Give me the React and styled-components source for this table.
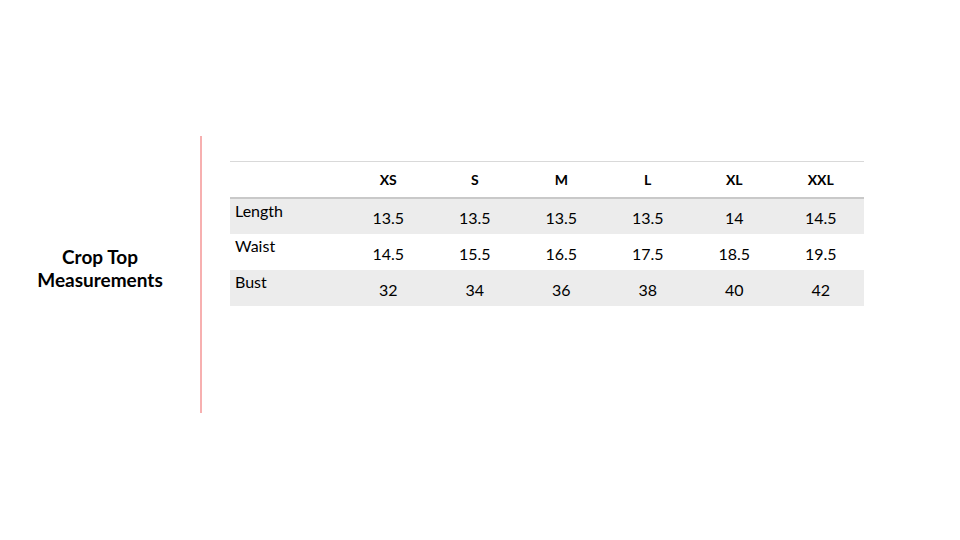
import React from "react";
import styled, { createGlobalStyle } from "styled-components";

const GlobalStyle = createGlobalStyle`
  html, body {
    margin: 0;
    padding: 0;
    background: #ffffff;
  }
  body {
    font-family: "Lato", "Open Sans", sans-serif;
    color: #000000;
  }
`;

const Page = styled.div`
  width: 960px;
  height: 540px;
  display: flex;
  align-items: flex-start;
  padding-top: 136px;
  box-sizing: border-box;
`;

const TitleColumn = styled.div`
  width: 202px;
  height: 277px;
  display: flex;
  align-items: center;
  justify-content: center;
  padding: 0 0 14px 0;
  box-sizing: border-box;
  border-right: 2px solid #f7b0b0;
`;

const Title = styled.h1`
  margin: 0;
  font-size: 19px;
  font-weight: 700;
  line-height: 23px;
  text-align: center;
`;

const Table = styled.table`
  margin-top: 25px;
  margin-left: 28px;
  width: 634px;
  border-collapse: collapse;
  table-layout: fixed;
  font-size: 16px;
`;

const HeadCell = styled.th`
  height: 35px;
  padding: 0;
  font-size: 14px;
  font-weight: 700;
  text-align: center;
  vertical-align: middle;
  border-top: 1px solid #d9d9d9;
  border-bottom: 2px solid #c9c9c9;
  width: ${(p) => (p.$label ? "115px" : "auto")};
`;

const Row = styled.tr`
  background: ${(p) => (p.$shaded ? "#ececec" : "#ffffff")};
`;

const LabelCell = styled.td`
  height: 36px;
  padding: 2px 0 0 5px;
  box-sizing: border-box;
  text-align: left;
  vertical-align: top;
`;

const ValueCell = styled.td`
  height: 36px;
  padding: 2px 0 0 0;
  box-sizing: border-box;
  text-align: center;
  vertical-align: middle;
`;

const sizes = ["XS", "S", "M", "L", "XL", "XXL"];

const rows = [
  { label: "Length", values: ["13.5", "13.5", "13.5", "13.5", "14", "14.5"] },
  { label: "Waist", values: ["14.5", "15.5", "16.5", "17.5", "18.5", "19.5"] },
  { label: "Bust", values: ["32", "34", "36", "38", "40", "42"] },
];

export default function App() {
  return (
    <>
      <GlobalStyle />
      <Page>
        <TitleColumn>
          <Title>
            Crop Top
            <br />
            Measurements
          </Title>
        </TitleColumn>
        <Table>
          <thead>
            <tr>
              <HeadCell $label />
              {sizes.map((s) => (
                <HeadCell key={s}>{s}</HeadCell>
              ))}
            </tr>
          </thead>
          <tbody>
            {rows.map((r, i) => (
              <Row key={r.label} $shaded={i % 2 === 0}>
                <LabelCell>{r.label}</LabelCell>
                {r.values.map((v, j) => (
                  <ValueCell key={j}>{v}</ValueCell>
                ))}
              </Row>
            ))}
          </tbody>
        </Table>
      </Page>
    </>
  );
}
